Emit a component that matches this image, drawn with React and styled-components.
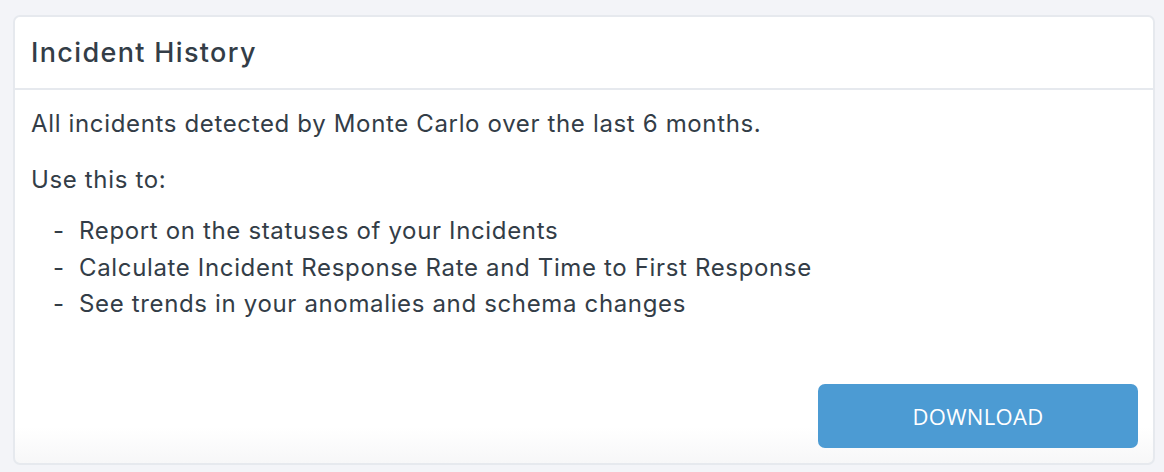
import React from 'react';
import styled, { createGlobalStyle } from 'styled-components';

const GlobalStyle = createGlobalStyle`
	html, body {
		margin: 0;
		padding: 0;
		background-color: #f3f4f8;
	}

	body {
		font-family: Inter, "Open Sans", sans-serif;
		color: #333d47;
	}
`;

const Page = styled.div`
	/* Display & Box Model */
	display: flex;
	height: 472px;
	padding: 15px 9px 7px 13px;
	box-sizing: border-box;
`;

const Card = styled.section`
	/* Display & Box Model */
	display: flex;
	flex-direction: column;
	flex: 1;
	border: 2px solid #e6e9ee;
	border-radius: 7px;
	overflow: hidden;

	/* Color */
	background: linear-gradient(to bottom, #ffffff 0%, #ffffff 92%, #f7f7f8 100%);
`;

const Header = styled.header`
	/* Display & Box Model */
	display: flex;
	align-items: center;
	height: 71px;
	padding: 0 16px;
	border-bottom: 2px solid #e6e9ee;
`;

const Title = styled.h2`
	margin: 0;
	font-size: 27px;
	font-weight: 500;
	letter-spacing: 1.35px;
`;

const Body = styled.div`
	/* Display & Box Model */
	display: flex;
	flex-direction: column;
	flex: 1;
	padding: 16px 15px 15px 16px;
`;

const Paragraph = styled.p`
	margin: 0 0 ${({ $gap }) => $gap || 0}px 0;
	font-size: 24px;
	line-height: 36px;
	letter-spacing: 0.65px;
`;

const List = styled.ul`
	margin: 0;
	padding: 0;
	list-style: none;
`;

const Item = styled.li`
	display: flex;
	font-size: 24px;
	line-height: 36.5px;
	letter-spacing: 0.65px;

	&::before {
		content: '-';
		width: 48px;
		padding-left: 22px;
		box-sizing: border-box;
	}
`;

const Footer = styled.div`
	display: flex;
	justify-content: flex-end;
	margin-top: auto;
`;

const DownloadButton = styled.button`
	/* Display & Box Model */
	width: 320px;
	height: 64px;
	border: 0;
	border-radius: 7px;

	/* Color */
	background-color: #4c9bd3;
	color: #ffffff;

	/* Text */
	font-family: "Open Sans", sans-serif;
	font-size: 22px;
	letter-spacing: 0.3px;

	cursor: pointer;
`;

const uses = [
	'Report on the statuses of your Incidents',
	'Calculate Incident Response Rate and Time to First Response',
	'See trends in your anomalies and schema changes'
];

const App = () => (
	<>
		<GlobalStyle />
		<Page>
			<Card>
				<Header>
					<Title>Incident History</Title>
				</Header>
				<Body>
					<Paragraph $gap={20}>All incidents detected by Monte Carlo over the last 6 months.</Paragraph>
					<Paragraph $gap={15}>Use this to:</Paragraph>
					<List>
						{uses.map(text => <Item key={text}>{text}</Item>)}
					</List>
					<Footer>
						<DownloadButton>DOWNLOAD</DownloadButton>
					</Footer>
				</Body>
			</Card>
		</Page>
	</>
);

export default App;
